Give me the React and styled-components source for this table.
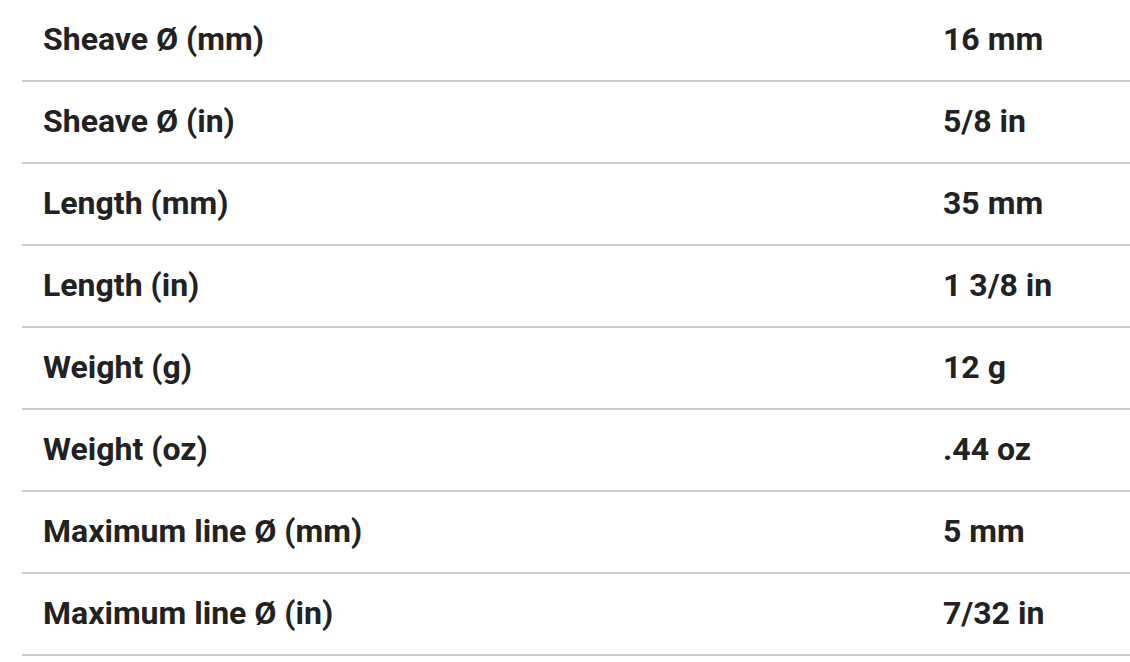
import React from 'react';
import styled, { createGlobalStyle } from 'styled-components';

const Global = createGlobalStyle`
    body {
        margin: 0;
        background: #ffffff;
        font-family: Roboto, "Liberation Sans", sans-serif;
    }
`

const Specs = styled.div`
    margin-left: 22px;
    width: 1120px;
`
const Row = styled.div`
    display: flex;
    align-items: center;
    height: 82px;
    padding-bottom: 3px;
    box-sizing: border-box;
    border-bottom: 2px solid #cccccc;
`
const Label = styled.div`
    width: 900px;
    padding-left: 21px;
    box-sizing: border-box;
    font-size: 32px;
    line-height: 1;
    font-weight: 700;
    color: #222222;
`
const Value = styled(Label)`
    width: auto;
    flex: 1;
`

const specs = [
    ['Sheave Ø (mm)', '16 mm'],
    ['Sheave Ø (in)', '5/8 in'],
    ['Length (mm)', '35 mm'],
    ['Length (in)', '1 3/8 in'],
    ['Weight (g)', '12 g'],
    ['Weight (oz)', '.44 oz'],
    ['Maximum line Ø (mm)', '5 mm'],
    ['Maximum line Ø (in)', '7/32 in'],
];

export default function App() {
    return (
        <>
            <Global />
            <Specs>
                {specs.map(([label, value]) => (
                    <Row key = {label}>
                        <Label>{label}</Label>
                        <Value>{value}</Value>
                    </Row>
                ))}
            </Specs>
        </>
    )
}
